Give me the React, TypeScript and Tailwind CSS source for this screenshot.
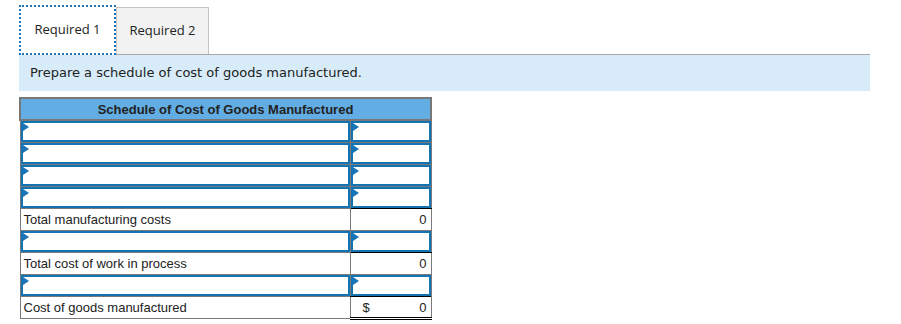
import React from "react";

const Flag = () => (
  <svg className="absolute left-0 top-0" width="6" height="8" viewBox="0 0 6 8">
    <polygon points="0,0 6,4 0,8" fill="#1a74b8" />
  </svg>
);

const InputCell = ({ bottomBlack = false }: { bottomBlack?: boolean }) => (
  <td className={`p-0 border border-[#7a7a7a] ${bottomBlack ? "border-b-black" : ""}`}>
    <div className="relative h-[21px] border-2 border-[#1373b3] bg-white">
      <Flag />
    </div>
  </td>
);

const InputRow = ({ bottomBlack = false }: { bottomBlack?: boolean }) => (
  <tr>
    <InputCell />
    <InputCell bottomBlack={bottomBlack} />
  </tr>
);

const TextRow = ({ label, dollar = false, last = false }: { label: string; dollar?: boolean; last?: boolean }) => (
  <tr>
    <td className="h-[22px] border border-[#7a7a7a] px-[3px] text-[13px] text-[#222] leading-none">{label}</td>
    <td
      className={`h-[22px] border border-[#7a7a7a] border-t-black px-[4px] text-[13px] text-[#222] leading-none ${
        last ? "border-b-[3px] border-b-black border-double" : ""
      }`}
    >
      <div className="flex justify-between">
        <span className="pl-[8px]">{dollar ? "$" : ""}</span>
        <span>0</span>
      </div>
    </td>
  </tr>
);

export default function App() {
  return (
    <div className="w-[901px] h-[324px] bg-white pt-[5px]" style={{ fontFamily: "'Liberation Sans', Arial, sans-serif" }}>
      <div className="ml-[19px] mr-[31px] flex items-end border-b border-[#a8a8a8] h-[50px]">
        <div
          className="w-[97px] h-[50px] -mb-px border-2 border-dotted border-[#1a74b8] bg-white flex items-center justify-center text-[13px] text-[#222]"
          style={{ fontFamily: "'Open Sans', 'Noto Sans', sans-serif" }}
        >
          Required 1
        </div>
        <div
          className="w-[93px] h-[47px] border border-b-0 border-[#c4c4c4] bg-[#f2f2f2] flex items-center justify-center text-[13px] text-[#222]"
          style={{ fontFamily: "'Open Sans', 'Noto Sans', sans-serif" }}
        >
          Required 2
        </div>
      </div>
      <div
        className="ml-[19px] mr-[31px] h-[36px] bg-[#d7ecf8] flex items-center pl-[11px] text-[13px] text-[#222]"
        style={{ fontFamily: "'DejaVu Sans', Verdana, sans-serif" }}
      >
        Prepare a schedule of cost of goods manufactured.
      </div>
      <table className="ml-[19px] mt-[6px] border-collapse w-[411px] table-fixed">
        <colgroup>
          <col className="w-[330px]" />
          <col className="w-[81px]" />
        </colgroup>
        <thead>
          <tr>
            <th colSpan={2} className="h-[22px] bg-[#62ade3] border-2 border-[#777] text-[13px] font-bold text-[#222] text-center leading-none">
              Schedule of Cost of Goods Manufactured
            </th>
          </tr>
        </thead>
        <tbody>
          <InputRow />
          <InputRow />
          <InputRow />
          <InputRow bottomBlack />
          <TextRow label="Total manufacturing costs" />
          <InputRow bottomBlack />
          <TextRow label="Total cost of work in process" />
          <InputRow bottomBlack />
          <TextRow label="Cost of goods manufactured" dollar last />
        </tbody>
      </table>
    </div>
  );
}
